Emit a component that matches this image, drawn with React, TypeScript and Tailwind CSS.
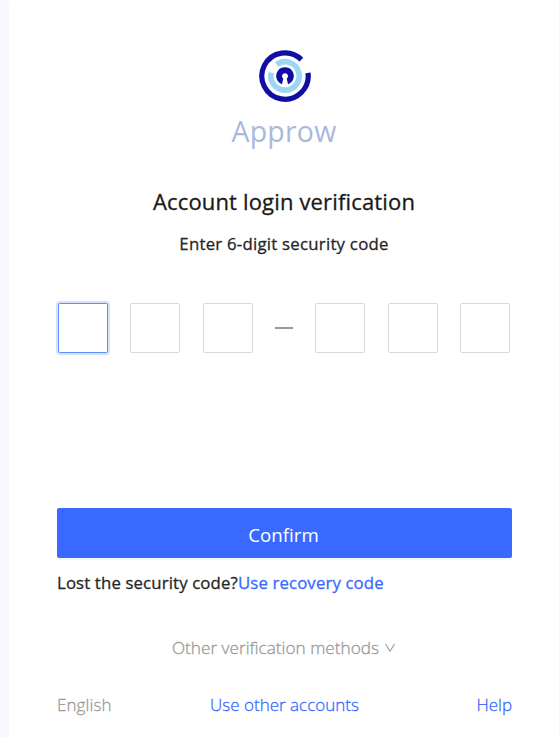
function Logo() {
  return (
    <svg className="relative left-px" width="52" height="52" viewBox="-26 -26 52 52" fill="none" aria-hidden="true">
      <path d="M16.4 -16.4A23.2 23.2 0 1 0 23 -3.2" stroke="#100ea3" strokeWidth="5.2" />
      <path d="M-8.4 -11.5A14.2 14.2 0 1 1 -13.8 -3.4" stroke="#9ad7f2" strokeWidth="5.6" />
      <path d="M-3 8.2A8.8 8.8 0 1 1 3 8.2L1.7 2.6A3 3 0 1 0 -1.7 2.6Z" fill="#100ea3" />
    </svg>
  );
}

function CodeBox({ active = false }: { active?: boolean }) {
  return (
    <input
      aria-label="digit"
      className={
        active
          ? "size-[50px] rounded-[2px] border border-[#5f8fff] bg-white shadow-[0_0_0_2px_rgba(56,106,255,0.2)] outline-none"
          : "size-[50px] rounded-[2px] border border-[#d9d9d9] bg-white outline-none"
      }
    />
  );
}

export default function App() {
  return (
    <div className="flex h-[737px] w-[560px] overflow-hidden bg-[#f6f7ff] pr-px pl-[9px] font-['Open_Sans','Noto_Sans',sans-serif]">
      <main className="flex w-[550px] flex-col rounded-tl-[4px] bg-white pr-[47px] pl-12">
        <header className="flex flex-col items-center pt-[50px] pr-px">
          <Logo />
          <div className="mt-[8px] h-[42px] text-[28.5px] leading-[42px] tracking-[0.2px] whitespace-nowrap text-[#a9b9db]">Approw</div>
          <h1 className="mt-[33px] h-8 text-[22px] leading-8 tracking-[0.16px] whitespace-nowrap text-[#191919] [-webkit-text-stroke:0.3px]">Account login verification</h1>
          <p className="mt-[15px] h-6 text-[16.8px] leading-6 tracking-[0.24px] whitespace-nowrap text-[#262626] [-webkit-text-stroke:0.3px]">Enter 6-digit security code</p>
        </header>

        <div className="mt-[47px] flex h-[50px] items-center justify-between pr-[2px] pl-px">
          <CodeBox active />
          <CodeBox />
          <CodeBox />
          <span className="h-[2px] w-[18px] bg-[#999]" />
          <CodeBox />
          <CodeBox />
          <CodeBox />
        </div>

        <button className="mt-[155px] h-[50px] shrink-0 rounded-[2px] bg-[#396aff] pt-[3px] pr-[2px] text-[18.7px] leading-[47px] text-white shadow-[0_2px_0_rgba(0,0,0,0.03)]">
          Confirm
        </button>
        <div className="mt-[13px] flex h-6 text-[16.8px] leading-6 tracking-[0.13px] whitespace-nowrap text-[#262626] [-webkit-text-stroke:0.3px]">
          <span>Lost the security code?</span>
          <a className="text-[#396aff]">Use recovery code</a>
        </div>

        <div className="mt-[41px] flex h-6 items-center justify-center gap-[6px] pr-[2px] text-[17.2px] leading-6 font-light whitespace-nowrap text-[#999] [-webkit-text-stroke:0.3px]">
          <span>Other verification methods</span>
          <svg width="10" height="10" viewBox="0 0 10 10" fill="none" stroke="currentColor" strokeWidth="1.1">
            <path d="M0.5 1L5 8.3L9.5 1" />
          </svg>
        </div>
        <footer className="mt-[33px] grid h-6 grid-cols-[1fr_auto_1fr] items-center text-[17px] leading-6 font-light whitespace-nowrap text-[#396aff] [-webkit-text-stroke:0.3px]">
          <span className="tracking-[0.1px] text-[#999]">English</span>
          <a>Use other accounts</a>
          <a className="text-right">Help</a>
        </footer>
      </main>
    </div>
  );
}
